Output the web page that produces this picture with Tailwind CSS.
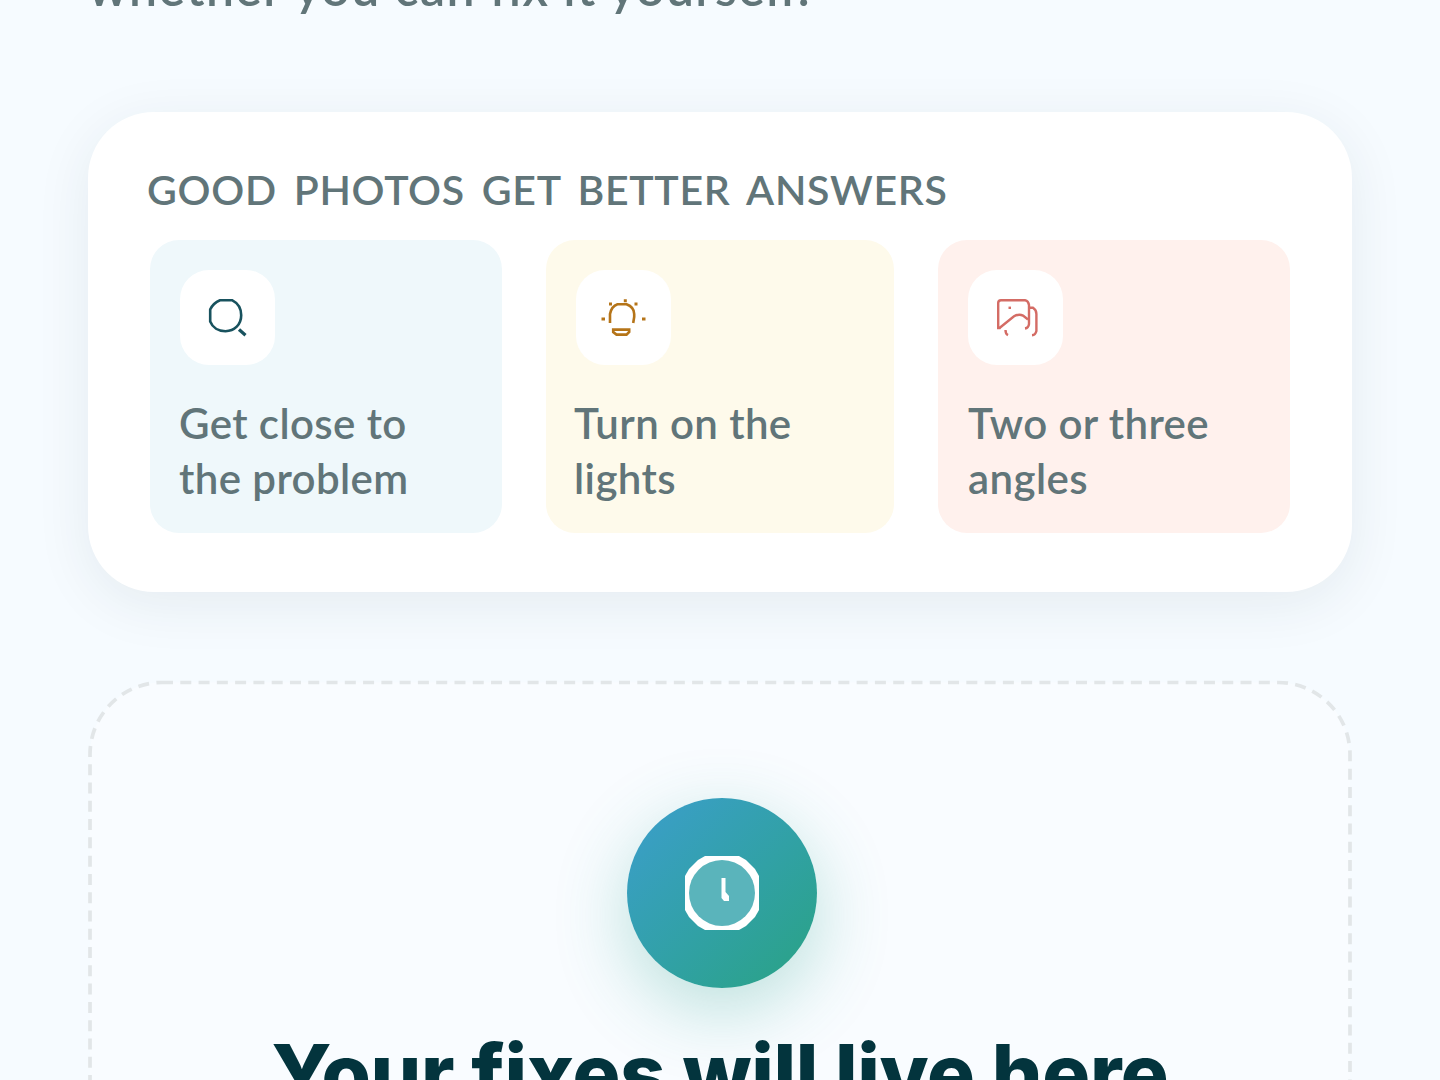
<!DOCTYPE html>
<html lang="en">
<head>
    <meta charset="UTF-8">
    <meta name="viewport" content="width=device-width, initial-scale=1.0">
    <title>Your fixes</title>
    <script src="https://cdn.jsdelivr.net/npm/@tailwindcss/browser@4"></script>
</head>
<body class="bg-[#f6fbff] font-[Lato,sans-serif] text-[#617579]">
    <main class="h-[1080px] overflow-hidden px-[88px]">
        <!-- intro -->
        <p class="-mt-[43px] h-[69px] whitespace-nowrap text-[50px] leading-[60px] font-semibold tracking-[1.38px]">whether you can fix it yourself.</p>

        <!-- photo tips -->
        <section class="mt-[86px] h-[480px] rounded-[66px] bg-white px-[62px] pt-[52px] shadow-[0_12px_56px_rgba(20,50,70,0.08)]">
            <h2 class="-ml-[3px] h-[76px] whitespace-nowrap text-[41px] leading-[52px] font-semibold tracking-[0.7px] [word-spacing:6px]">GOOD PHOTOS GET BETTER ANSWERS</h2>
            <div class="grid grid-cols-[352px_348px_352px] gap-[44px] text-[42px] leading-[55px] font-semibold tracking-[0.4px]">
                <div class="h-[293px] rounded-[29px] bg-[#eff8fb] p-[30px] pr-0">
                    <div class="-ml-[0.5px] size-[95px] rounded-[29px] bg-white">
                        <svg class="size-[95px]" viewBox="0 0 95 95" fill="none" stroke="#18525e" stroke-width="2.6">
                            <path d="M40 30.2H52C57.5 33 61.2 38.5 61.2 45.3C61.2 54.5 54.5 61.2 45.5 61.2C38.5 61.2 32.5 57.5 30.2 51.5V39.5C32 35.5 35.5 32 40 30.2Z"/>
                            <path d="M59 59.5L65.5 65.3" stroke-width="3.2"/>
                        </svg>
                    </div>
                    <p class="mt-[31px] -ml-px whitespace-nowrap">Get close to<br>the problem</p>
                </div>
                <div class="h-[293px] rounded-[29px] bg-[#fefaeb] p-[30px] pr-0">
                    <div class="-ml-[0.5px] size-[95px] rounded-[29px] bg-white">
                        <svg class="size-[95px]" viewBox="0 0 95 95" fill="none" stroke="#b57418" stroke-width="2.6">
                            <path d="M34 53V44C35 39 37.5 35.5 41.5 34.2H50.5C55.5 36 58.2 40 58.2 44V47L57.2 53"/>
                            <path d="M37.2 59.6H53.2V62L50.5 64.6H40.5L37.2 62Z"/>
                            <path d="M25.5 49H29M66 49H69.5M47.8 30.8H50.8M33 34H36M58.5 34H61.5" stroke-width="3"/>
                        </svg>
                    </div>
                    <p class="mt-[31px] -ml-[2px] whitespace-nowrap">Turn on the<br>lights</p>
                </div>
                <div class="h-[293px] rounded-[29px] bg-[#fff1ed] p-[30px] pr-0">
                    <div class="-ml-[0.5px] size-[95px] rounded-[29px] bg-white">
                        <svg class="size-[95px]" viewBox="0 0 95 95" fill="none" stroke="#d46c65" stroke-width="2.4">
                            <path d="M32.5 58H30.2V33Q30.2 30.2 33 30.2H57Q60.5 31 61 35V54Q60.5 58 57 58.5"/>
                            <path d="M31.5 58L46 46.3Q51 43.5 55 45.6L60 49.5"/>
                            <path d="M61.5 37.8H65Q68.4 40 68.4 44V61Q67.5 65 64 65.2M37.5 60Q37.5 64 40 65.2"/>
                            <path d="M40.5 37.8H43"/>
                        </svg>
                    </div>
                    <p class="mt-[31px] whitespace-nowrap">Two or three<br>angles</p>
                </div>
            </div>
        </section>

        <!-- empty state -->
        <section class="relative mt-[88px] h-[480px]">
            <svg class="absolute inset-0" width="1264" height="480" fill="none" stroke="#e2e6e8" stroke-width="3.7">
                <path d="M2 480V74.5A72 72 0 0 1 74 2.5H1190A72 72 0 0 1 1262 74.5V480" fill="#f9fcff" stroke="none"/>
                <path d="M74 2.5H1190A72 72 0 0 1 1262 74.5V480" stroke-dasharray="11 7.28"/>
                <path d="M74 2.5A72 72 0 0 0 2 74.5V480" stroke-dasharray="11 7.28" stroke-dashoffset="5.3"/>
            </svg>
            <div class="relative flex flex-col items-center pt-[118px]">
                <div class="ml-[4px] flex size-[190px] items-center justify-center rounded-full bg-linear-135 from-[#3b9ec9] from-5% to-[#2ba28a] to-90% shadow-[0_22px_72px_rgba(43,162,138,0.3)]">
                    <svg width="74" height="74" viewBox="0 0 74 74" fill="none">
                        <path d="M20 0H54L61 4L70 13L74 20V54L70 61L61 70L54 74H20L13 70L4 61L0 54V20L4 13L13 4Z" fill="white"/>
                        <circle cx="37" cy="37" r="33" fill="#5ab4bb"/>
                        <path d="M36.5 22H40.5V36L44 40V45H39L36.5 42Z" fill="white"/>
                    </svg>
                </div>
                <h1 class="mt-[35px] whitespace-nowrap font-[Inter,sans-serif] text-[80px] leading-[100px] font-extrabold tracking-[-0.4px] text-[#03343d]">Your fixes will live here</h1>
            </div>
        </section>
    </main>
</body>
</html>
